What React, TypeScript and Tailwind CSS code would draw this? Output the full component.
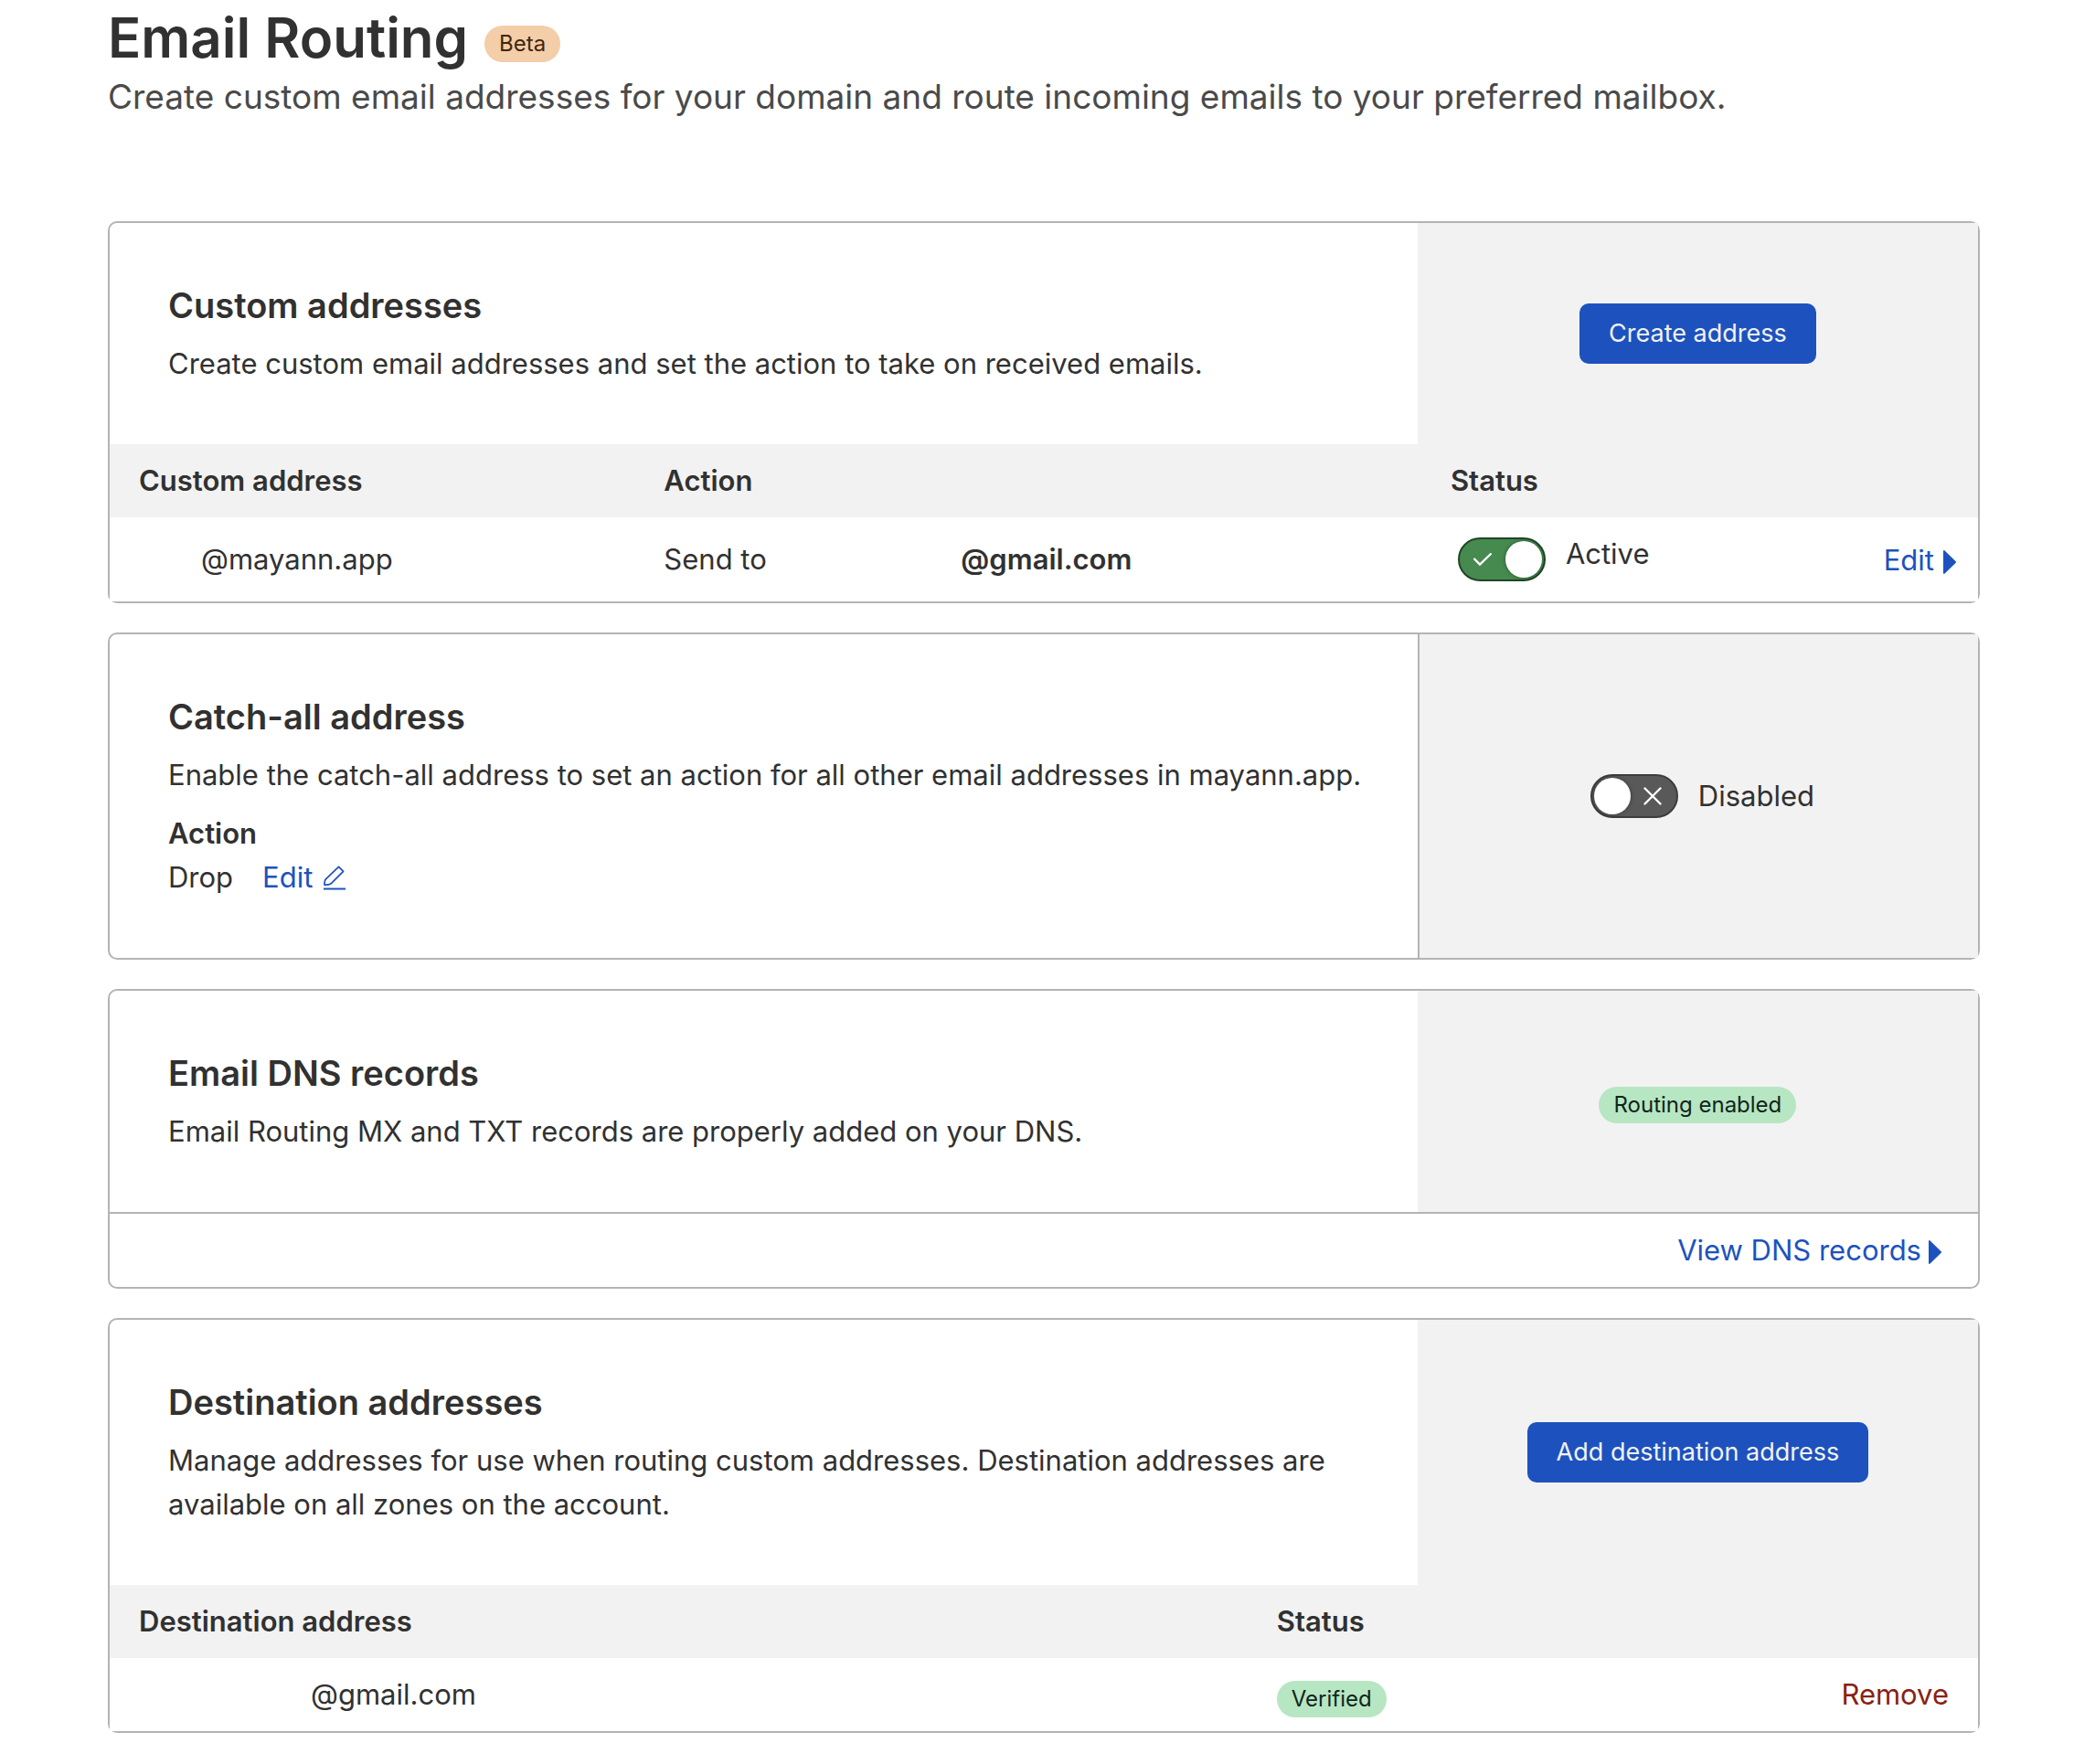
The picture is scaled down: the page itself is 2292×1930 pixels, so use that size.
import { useState, type ReactNode } from "react";

const card = "rounded-[10px] border-2 border-[#b4b4b4]";
const link = "inline-flex items-center text-[#1d52be]";
const headCell = "h-20 bg-[#f2f2f2] px-8 text-left font-semibold";

function Caret() {
  return (
    <svg className="mt-1" width="14" height="26" viewBox="0 0 14 26" fill="currentColor" aria-hidden="true">
      <path d="M0 1C0 .1.9-.3 1.600.4L13.700 12.300c.4.4.4 1 0 1.400L1.600 25.600c-.7.7-1.600.3-1.600-.6z" />
    </svg>
  );
}

function Pencil() {
  return (
    <svg width="24" height="27" viewBox="0 0 24 27" fill="none" stroke="currentColor" aria-hidden="true">
      <path d="M16.500 1.300 21.600 6.400 7.800 20.100C5.900 21.200 3.400 21.300 1 21.200 1 18.800 1.100 16.300 2.400 14.900z" strokeWidth="1.700" strokeLinejoin="round" />
      <path d="M0 25.500H24" strokeWidth="2" />
    </svg>
  );
}

function Toggle({ initial, onText, offText, raised }: { initial: boolean; onText: string; offText: string; raised?: boolean }) {
  const [on, setOn] = useState(initial);
  return (
    <label className="relative ml-2 inline-flex cursor-pointer items-center gap-[22px] align-middle">
      <input type="checkbox" role="switch" checked={on} onChange={() => setOn(!on)} className="sr-only" />
      <span
        className={
          on
            ? "flex h-12 w-24 items-center justify-between rounded-full border-2 border-[#1f4528] bg-[#468a4f] pr-0.5 pl-3.5"
            : "flex h-12 w-24 flex-row-reverse items-center justify-between rounded-full border-2 border-[#3d3d3d] bg-[#595959] pr-4 pl-0.5"
        }
      >
        {on ? (
          <svg width="22" height="16" viewBox="0 0 22 16" fill="none" stroke="white" strokeWidth="2.400" aria-hidden="true">
            <path d="M1.500 7 8 13.600 20.500 1.500" />
          </svg>
        ) : (
          <svg width="20" height="20" viewBox="0 0 20 20" fill="none" stroke="white" strokeWidth="2.400" strokeLinecap="round" aria-hidden="true">
            <path d="M1.500 1.500l17 17M18.500 1.500l-17 17" />
          </svg>
        )}
        <span className="size-10 rounded-full bg-white shadow-[0_0_4px_rgba(0,0,0,0.4)]" />
      </span>
      <span className={raised ? "pb-3" : ""}>{on ? onText : offText}</span>
    </label>
  );
}

function Pill({ tone, children }: { tone: "orange" | "green"; children: ReactNode }) {
  return (
    <span
      className={
        tone === "orange"
          ? "inline-flex h-10 items-center rounded-full bg-[#f4cda9] px-4 text-2xl text-[#40270b]"
          : "mt-2 inline-flex h-10 items-center rounded-full bg-[#b7e6c3] px-4 align-middle text-2xl text-[#10251a]"
      }
    >
      {children}
    </span>
  );
}

function PrimaryButton({ children }: { children: ReactNode }) {
  return (
    <button type="button" className="h-[66px] rounded-[10px] bg-[#1d52be] px-8 text-[27px] text-[#f2f2f2]">
      {children}
    </button>
  );
}

function Intro({ title, text, children, divided, aside }: { title: string; text: string; children?: ReactNode; divided?: boolean; aside: ReactNode }) {
  return (
    <div className="flex">
      <div className="w-[70%] py-16 pr-12 pl-16">
        <h2 className="mb-3.5 text-[38px] leading-[52px] font-semibold">{title}</h2>
        <p>{text}</p>
        {children}
      </div>
      <div
        className={
          divided
            ? "flex w-[30%] items-center justify-center border-l-2 border-[#b4b4b4] bg-[#f2f2f2]"
            : "flex w-[30%] items-center justify-center bg-[#f2f2f2]"
        }
      >
        {aside}
      </div>
    </div>
  );
}

export default function App() {
  return (
    <main className="min-h-screen bg-white pt-2 pr-[126px] pb-[34px] pl-[118px] font-['Inter',sans-serif] text-[31px] leading-[48px] text-[#313131]">
      <header className="mb-[108px]">
        <div className="flex items-end gap-[18px]">
          <h1 className="text-[60px] leading-[66px] font-semibold">Email Routing</h1>
          <div className="mb-1.5 flex">
            <Pill tone="orange">Beta</Pill>
          </div>
        </div>
        <p className="mt-1 text-[37px] leading-[56px] text-[#4a4a4a]">
          Create custom email addresses for your domain and route incoming emails to your preferred mailbox.
        </p>
      </header>

      <div className="flex flex-col gap-8">
        <section className={card}>
          <Intro
            title="Custom addresses"
            text="Create custom email addresses and set the action to take on received emails."
            aside={<PrimaryButton>Create address</PrimaryButton>}
          />
          <table className="w-full table-fixed">
            <colgroup>
              <col className="w-[28.1%]" />
              <col className="w-[42.1%]" />
              <col className="w-[15%]" />
              <col />
            </colgroup>
            <thead>
              <tr>
                <th className={headCell}>Custom address</th>
                <th className={headCell}>Action</th>
                <th className={headCell} colSpan={2}>Status</th>
              </tr>
            </thead>
            <tbody className="bg-white">
              <tr className="h-[92px]">
                <td className="pl-[100px]">@mayann.app</td>
                <td className="px-8">
                  <span className="inline-block w-[325px]">Send to</span>
                  <strong className="font-semibold">@gmail.com</strong>
                </td>
                <td className="pl-8 whitespace-nowrap">
                  <Toggle initial onText="Active" offText="Disabled" raised />
                </td>
                <td className="pr-6 text-right">
                  <a href="#edit-address" className={`${link} gap-2.5 align-middle`}>
                    Edit
                    <Caret />
                  </a>
                </td>
              </tr>
            </tbody>
          </table>
        </section>

        <section className={card}>
          <Intro
            title="Catch-all address"
            text="Enable the catch-all address to set an action for all other email addresses in mayann.app."
            divided
            aside={<Toggle initial={false} onText="Active" offText="Disabled" />}
          >
            <h3 className="mt-4 font-semibold">Action</h3>
            <div className="flex gap-8">
              <span>Drop</span>
              <a href="#edit-action" className={`${link} gap-3`}>
                Edit
                <Pencil />
              </a>
            </div>
          </Intro>
        </section>

        <section className={card}>
          <Intro
            title="Email DNS records"
            text="Email Routing MX and TXT records are properly added on your DNS."
            aside={<Pill tone="green">Routing enabled</Pill>}
          />
          <div className="flex h-[82px] items-center justify-end border-t-2 border-[#b4b4b4] pr-10">
            <a href="#dns-records" className={`${link} gap-2`}>
              View DNS records
              <Caret />
            </a>
          </div>
        </section>

        <section className={card}>
          <Intro
            title="Destination addresses"
            text="Manage addresses for use when routing custom addresses. Destination addresses are available on all zones on the account."
            aside={<PrimaryButton>Add destination address</PrimaryButton>}
          />
          <table className="w-full table-fixed">
            <colgroup>
              <col className="w-[60.9%]" />
              <col className="w-[24%]" />
              <col />
            </colgroup>
            <thead>
              <tr>
                <th className={headCell}>Destination address</th>
                <th className={headCell} colSpan={2}>Status</th>
              </tr>
            </thead>
            <tbody className="bg-white">
              <tr className="h-20">
                <td className="pl-[220px]">@gmail.com</td>
                <td className="px-8">
                  <Pill tone="green">Verified</Pill>
                </td>
                <td className="pr-8 text-right">
                  <button type="button" className="text-[#8a2115]">Remove</button>
                </td>
              </tr>
            </tbody>
          </table>
        </section>
      </div>
    </main>
  );
}
